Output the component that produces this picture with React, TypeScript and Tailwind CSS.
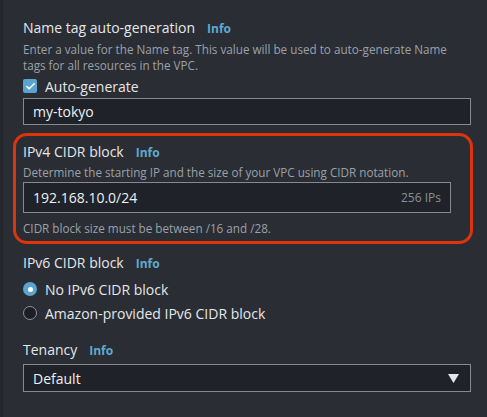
import { Check } from 'lucide-react';

const Info = () => (
  <span className="ml-3 text-[12px] font-bold text-[#5fa9d1]">Info</span>
);

const Label = ({ children }: { children: React.ReactNode }) => (
  <div className="flex items-baseline text-[14px] leading-[20px] text-[#e4e7ea]">
    <span>{children}</span>
    <Info />
  </div>
);

const Radio = ({ checked, label }: { checked?: boolean; label: string }) => (
  <label className="flex items-center h-[24px]">
    <span
      className={`flex items-center justify-center w-[14px] h-[14px] rounded-full ${
        checked ? 'bg-[#5aa4d0]' : 'bg-[#1c1f25] border border-[#8d9299]'
      }`}
    >
      {checked && <span className="w-[5px] h-[5px] rounded-full bg-white" />}
    </span>
    <span className="ml-2 text-[14px] text-[#e4e7ea]">{label}</span>
  </label>
);

export default function App() {
  return (
    <div
      className="w-[487px] h-[417px] flex bg-[#2a2d33] overflow-hidden"
      style={{ fontFamily: '"Open Sans", "Noto Sans", sans-serif' }}
    >
      <div className="w-[3px] bg-[#23262b]" />
      <div className="flex-1 flex flex-col pl-[20px] pr-[16px] pt-[18px]">
        <Label>Name tag auto-generation</Label>
        <p className="mt-[2px] text-[11.7px] leading-[16px] text-[#9aa1aa]">
          Enter a value for the Name tag. This value will be used to auto-generate Name tags for all resources in the VPC.
        </p>
        <label className="mt-[3px] flex items-center h-[20px]">
          <span className="flex items-center justify-center w-[14px] h-[14px] rounded-[2px] bg-[#5aa4d0]">
            <Check className="w-[11px] h-[11px] text-white" strokeWidth={3.5} />
          </span>
          <span className="ml-2 text-[14px] text-[#e4e7ea]">Auto-generate</span>
        </label>
        <div className="mt-[2px] h-[27px] flex items-center px-[9px] border border-[#868a90] bg-[#1f2228] text-[14px] text-[#eef0f2]">
          my-tokyo
        </div>

        <div className="mt-[8px] -ml-[10px] mr-[-2px] border-[3px] border-[#dd340d] rounded-[14px] pl-[7px] pr-[19px] pt-[6px] pb-[5px]">
          <Label>IPv4 CIDR block</Label>
          <p className="mt-[1px] text-[11.7px] leading-[16px] text-[#9aa1aa]">
            Determine the starting IP and the size of your VPC using CIDR notation.
          </p>
          <div className="mt-[2px] h-[31px] flex items-center justify-between px-[9px] border border-[#868a90] bg-[#1f2228]">
            <span className="text-[14px] text-[#eef0f2]">192.168.10.0/24</span>
            <span className="text-[12px] text-[#8a9099]">256 IPs</span>
          </div>
          <p className="mt-[7px] text-[11.7px] leading-[16px] text-[#9aa1aa]">
            CIDR block size must be between /16 and /28.
          </p>
        </div>

        <div className="mt-[9px]">
          <Label>IPv6 CIDR block</Label>
        </div>
        <div className="mt-[3px] flex flex-col">
          <Radio checked label="No IPv6 CIDR block" />
          <Radio label="Amazon-provided IPv6 CIDR block" />
        </div>

        <div className="mt-[15px]">
          <Label>Tenancy</Label>
        </div>
        <div className="mt-[3px] h-[28px] flex items-center justify-between pl-[9px] pr-[11px] border border-[#868a90] bg-[#1f2228]">
          <span className="text-[14px] text-[#eef0f2]">Default</span>
          <svg width="11" height="9" viewBox="0 0 11 9">
            <path d="M0 0 H11 L5.5 9 Z" fill="#e4e7ea" />
          </svg>
        </div>
      </div>
    </div>
  );
}
